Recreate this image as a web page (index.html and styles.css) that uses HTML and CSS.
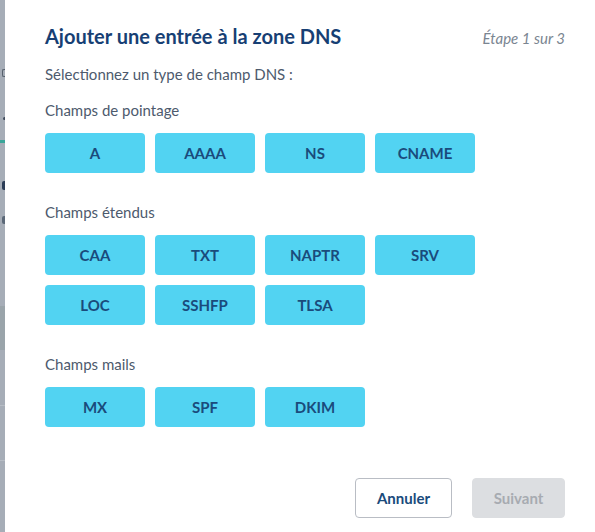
FILE: index.html
```html
<!DOCTYPE html>
<html lang="fr">
<head>
<meta charset="utf-8">
<title>Ajouter une entrée à la zone DNS</title>
<link rel="stylesheet" href="styles.css">
</head>
<body>
<div class="page">
  <div class="backdrop" aria-hidden="true">
    <span class="bd-mark bd-c"></span>
    <span class="bd-mark bd-colon"></span>
    <span class="bd-teal"></span>
    <span class="bd-mark bd-r"></span>
    <span class="bd-mark bd-e"></span>
    <span class="bd-band"></span>
    <span class="bd-line bd-l1"></span>
    <span class="bd-line bd-l2"></span>
  </div>
  <div class="dialog">
    <div class="header">
      <h1 class="title">Ajouter une entrée à la zone DNS</h1>
      <span class="step">Étape 1 sur 3</span>
    </div>
    <p class="intro">Sélectionnez un type de champ DNS :</p>

    <h2 class="group-label">Champs de pointage</h2>
    <div class="grid">
      <button class="type-btn">A</button>
      <button class="type-btn">AAAA</button>
      <button class="type-btn">NS</button>
      <button class="type-btn">CNAME</button>
    </div>

    <h2 class="group-label">Champs étendus</h2>
    <div class="grid">
      <button class="type-btn">CAA</button>
      <button class="type-btn">TXT</button>
      <button class="type-btn">NAPTR</button>
      <button class="type-btn">SRV</button>
      <button class="type-btn">LOC</button>
      <button class="type-btn">SSHFP</button>
      <button class="type-btn">TLSA</button>
    </div>

    <h2 class="group-label">Champs mails</h2>
    <div class="grid">
      <button class="type-btn">MX</button>
      <button class="type-btn">SPF</button>
      <button class="type-btn">DKIM</button>
    </div>

    <div class="footer">
      <button class="btn-cancel">Annuler</button>
      <button class="btn-next" disabled>Suivant</button>
    </div>
  </div>
</div>
</body>
</html>
```
FILE: styles.css
```css
* { box-sizing: border-box; }
html, body {
  margin: 0;
  padding: 0;
  background: #ffffff;
}
body {
  font-family: Lato, "Source Sans Pro", "Liberation Sans", sans-serif;
  width: 595px;
  height: 532px;
  overflow: hidden;
}
.page {
  display: flex;
  height: 532px;
}
.backdrop {
  width: 5px;
  flex: none;
  background: #a6adb7;
  overflow: hidden;
  display: flex;
  flex-direction: column;
  align-items: flex-end;
}
.bd-mark {
  display: block;
  width: 3px;
  border-radius: 2px 0 0 2px;
  background: #56606c;
}
.bd-c { margin-top: 69px; height: 8px; border: 1.5px solid #56606c; border-right: none; background: transparent; }
.bd-colon { margin-top: 40px; height: 3px; width: 2px; background: #3f4b5c; }
.bd-teal {
  display: block;
  width: 5px;
  height: 3px;
  margin-top: 20px;
  background: #3aa69a;
}
.bd-r { margin-top: 38px; height: 9px; width: 3px; background: #2c3d57; }
.bd-e { margin-top: 26px; height: 8px; width: 3px; background: #5b6878; }
.bd-band {
  display: block;
  width: 5px;
  height: 44px;
  margin-top: 82px;
  background: #9aa4aa;
}
.bd-line {
  display: block;
  width: 5px;
  height: 1px;
  background: #b7bdc5;
}
.bd-l1 { margin-top: 55px; }
.bd-l2 { margin-top: 54px; }

.dialog {
  flex: 1;
  background: #ffffff;
  padding: 24px 30px 0 40px;
  display: flex;
  flex-direction: column;
}
.header {
  display: flex;
  justify-content: space-between;
  align-items: baseline;
}
.title {
  margin: 0;
  font-size: 20px;
  line-height: 24px;
  font-weight: 700;
  color: #173f74;
}
.step {
  font-size: 15px;
  font-style: italic;
  color: #7a8591;
}
.intro {
  margin: 16px 0 0;
  font-size: 15px;
  line-height: 20px;
  color: #4d5a6d;
}
.group-label {
  margin: 16px 0 0;
  font-size: 15px;
  line-height: 20px;
  font-weight: 400;
  color: #4d5a6d;
}
.grid {
  display: grid;
  grid-template-columns: repeat(4, 100px);
  gap: 10px;
  margin-top: 13px;
  margin-bottom: 13px;
}
.type-btn {
  height: 40px;
  border: none;
  border-radius: 4px;
  background: #52d3f2;
  color: #1a4b7c;
  font-family: inherit;
  font-size: 15px;
  font-weight: 700;
  padding: 0;
}
.footer {
  margin-top: auto;
  margin-bottom: 14px;
  display: flex;
  justify-content: flex-end;
  gap: 20px;
}
.btn-cancel, .btn-next {
  height: 40px;
  border-radius: 4px;
  font-family: inherit;
  font-size: 15px;
  font-weight: 700;
  padding: 0;
}
.btn-cancel {
  width: 97px;
  background: #ffffff;
  border: 1px solid #b9bdc4;
  color: #1a4b7c;
}
.btn-next {
  width: 93px;
  background: #dcdee1;
  border: 1px solid #dcdee1;
  color: #a7abb1;
}
```
